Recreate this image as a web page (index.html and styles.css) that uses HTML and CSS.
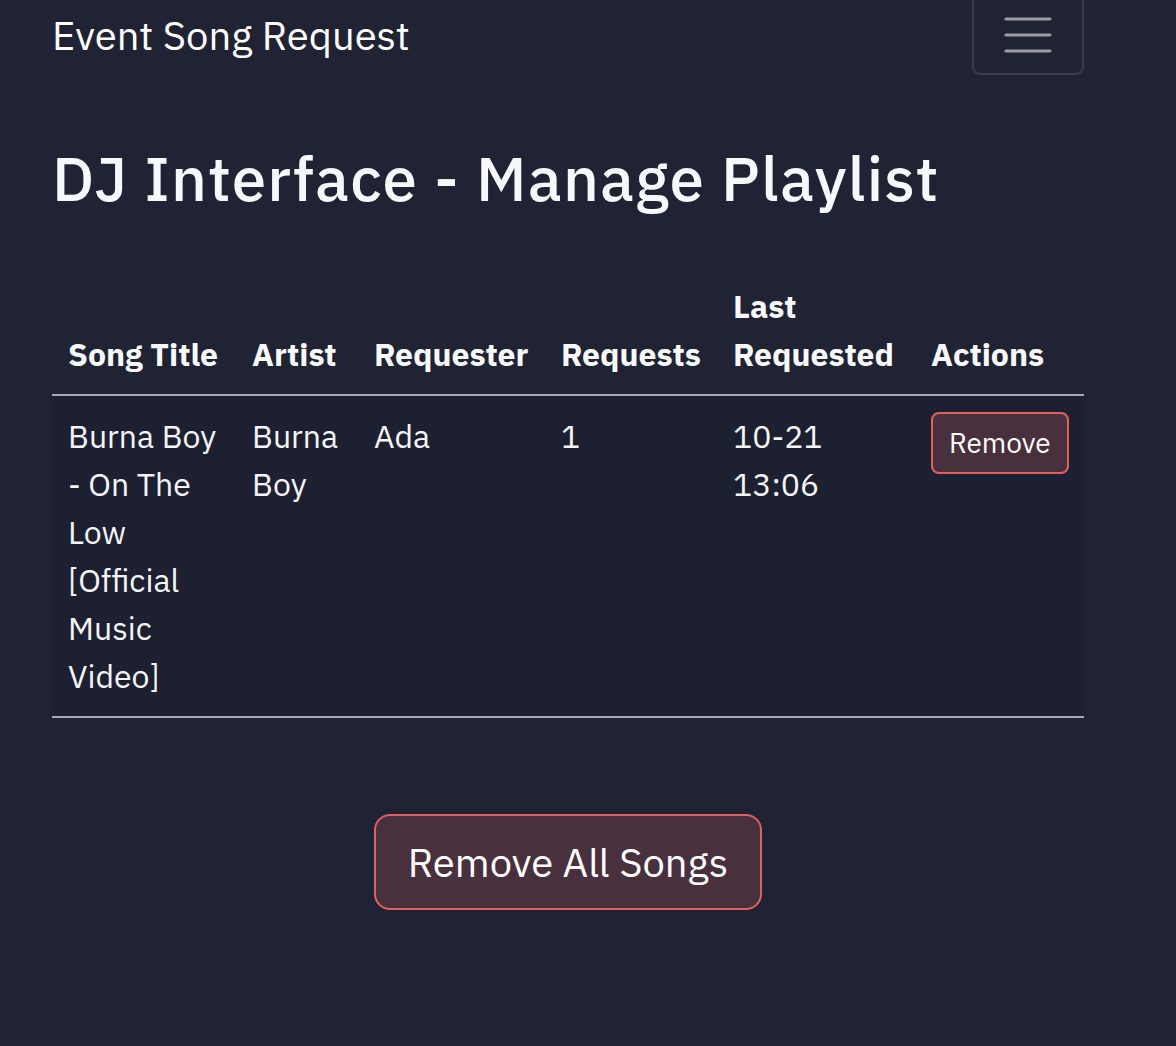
FILE: index.html
```html
<!DOCTYPE html>
<html lang="en">
<head>
<meta charset="utf-8">
<title>Event Song Request</title>
<link rel="stylesheet" href="styles.css">
</head>
<body>
<nav class="navbar">
  <span class="brand">Event Song Request</span>
  <button class="toggler" aria-label="Toggle navigation">
    <svg class="toggler-icon" viewBox="0 0 30 30" width="60" height="60"><path d="M4 7h22M4 15h22M4 23h22" stroke="rgba(255,255,255,0.55)" stroke-width="1.6" stroke-linecap="round" fill="none"/></svg>
  </button>
</nav>
<main class="container">
  <h1 class="title">DJ Interface - Manage Playlist</h1>
  <table class="playlist">
    <colgroup>
      <col class="c-title"><col class="c-artist"><col class="c-req"><col class="c-count"><col class="c-last"><col class="c-act">
    </colgroup>
    <thead>
      <tr>
        <th>Song Title</th>
        <th>Artist</th>
        <th>Requester</th>
        <th>Requests</th>
        <th>Last Requested</th>
        <th>Actions</th>
      </tr>
    </thead>
    <tbody>
      <tr>
        <td>Burna Boy - On The Low [Official Music Video]</td>
        <td>Burna Boy</td>
        <td>Ada</td>
        <td>1</td>
        <td>10-21 13:06</td>
        <td><button class="btn btn-sm">Remove</button></td>
      </tr>
    </tbody>
  </table>
  <div class="footer-actions">
    <button class="btn btn-lg">Remove All Songs</button>
  </div>
</main>
</body>
</html>
```

FILE: styles.css
```css
html, body {
  margin: 0;
  padding: 0;
}
body {
  background: #1f2333;
  color: #f4f5f8;
  font-family: "IBM Plex Sans", "Noto Sans", "Open Sans", sans-serif;
  font-size: 32px;
  line-height: 1.5;
  width: 1032px;
  padding-left: 52px;
}
.navbar {
  display: flex;
  align-items: center;
  justify-content: space-between;
  height: 80px;
  margin-top: -5px;
}
.brand {
  font-size: 40px;
  line-height: 60px;
  color: #ffffff;
}
.toggler {
  display: flex;
  align-items: center;
  justify-content: center;
  width: 112px;
  height: 80px;
  padding: 8px 24px;
  background: transparent;
  border: 2px solid #393d4d;
  border-radius: 8px;
  box-sizing: border-box;
}
.toggler-icon {
  display: block;
}
.container {
  display: block;
}
.title {
  font-size: 62px;
  font-weight: 500;
  letter-spacing: 1.2px;
  line-height: 1.2;
  margin: 66px 0 51px 0;
  color: #f6f8fb;
}
.playlist {
  width: 1032px;
  border-collapse: collapse;
  table-layout: fixed;
}
.c-title { width: 184px; }
.c-artist { width: 122px; }
.c-req { width: 187px; }
.c-count { width: 172px; }
.c-last { width: 198px; }
.c-act { width: 169px; }
.playlist th {
  text-align: left;
  font-weight: 700;
  vertical-align: bottom;
  padding: 16px;
  line-height: 48px;
  border-bottom: 2px solid #a3a9bd;
  color: #f8f9fb;
}
.playlist td {
  vertical-align: top;
  padding: 16px;
  line-height: 48px;
  background: #1d2030;
  border-bottom: 2px solid #a3a9bd;
}
.btn {
  font-family: inherit;
  color: #ffffff;
  background: #48303d;
  border: 2px solid #e0625f;
  cursor: pointer;
  box-sizing: border-box;
}
.btn-sm {
  font-size: 28px;
  line-height: 42px;
  padding: 8px 16px;
  border-radius: 8px;
  margin-top: 0;
}
.footer-actions {
  display: flex;
  justify-content: center;
  margin-top: 96px;
}
.btn-lg {
  font-size: 40px;
  line-height: 60px;
  padding: 16px 32px;
  border-radius: 16px;
}
```
